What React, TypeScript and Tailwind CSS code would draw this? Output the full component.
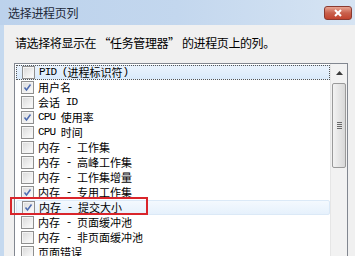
const items = [
  { label: 'PID (进程标识符)', checked: false },
  { label: '用户名', checked: true },
  { label: '会话 ID', checked: false },
  { label: 'CPU 使用率', checked: true },
  { label: 'CPU 时间', checked: false },
  { label: '内存 - 工作集', checked: false },
  { label: '内存 - 高峰工作集', checked: false },
  { label: '内存 - 工作集增量', checked: false },
  { label: '内存 - 专用工作集', checked: true },
  { label: '内存 - 提交大小', checked: true },
  { label: '内存 - 页面缓冲池', checked: false },
  { label: '内存 - 非页面缓冲池', checked: false },
  { label: '页面错误', checked: false },
];

// latin runs are half the width of the CJK glyphs, like the old dialog font
const Label = ({ text }: { text: string }) => {
  const parts = text.match(/[\x00-\x7f]+|[^\x00-\x7f]+/g) || [];
  return (
    <span className="flex h-[13px] items-center whitespace-pre text-black">
      {parts.map((p, i) =>
        /^[\x00-\x7f]+$/.test(p) ? (
          <span
            key={i}
            className="inline-block text-[11px] leading-[13px] tracking-[-0.9px]"
            style={{ fontFamily: '"Liberation Mono", monospace' }}
          >
            {p}
          </span>
        ) : (
          <span
            key={i}
            className="inline-block text-[11px] leading-[13px]"
            style={{ fontFamily: '"Noto Sans CJK SC", sans-serif' }}
          >
            {p}
          </span>
        )
      )}
    </span>
  );
};

const Check = ({ checked }: { checked: boolean }) => (
  <div className="flex h-[13px] w-[13px] shrink-0 items-center justify-center border border-[#8f8f8f] bg-white">
    <div className="flex h-[11px] w-[11px] items-center justify-center border border-[#f4f4f4] bg-gradient-to-br from-[#dcdcdc] to-[#fbfbfb]">
      {checked && (
        <svg width="9" height="9" viewBox="0 0 9 9">
          <path d="M1.5 4.5 L3.5 7 L7.5 1.5" fill="none" stroke="#4d6bb0" strokeWidth="1.5" />
        </svg>
      )}
    </div>
  </div>
);

const App = () => {
  return (
    <div
      className="relative flex h-[256px] w-[355px] flex-col overflow-hidden bg-[#c5d9ef]"
      style={{ fontFamily: '"Noto Sans CJK SC", sans-serif' }}
    >
      {/* title bar */}
      <div className="flex h-[25px] shrink-0 items-center justify-between bg-gradient-to-r from-[#bcd2ec] via-[#c3d7ee] to-[#d6e4f3] pl-[8px] pr-[3px]">
        <span className="text-[12px] leading-none tracking-[-0.3px] text-[#1e2a3a]">选择进程页列</span>
        <div className="flex h-[14px] w-[28px] items-center justify-center rounded-[3px] border border-[#8a3a30] bg-gradient-to-b from-[#e8a493] via-[#c8604c] to-[#c2432e]">
          <svg width="10" height="8" viewBox="0 0 10 8">
            <path d="M2 1 L8 7 M8 1 L2 7" stroke="white" strokeWidth="2" />
          </svg>
        </div>
      </div>

      {/* body */}
      <div className="ml-[4px] flex flex-1 flex-col bg-[#f0f0f0]">
        <p className="mt-[10px] pl-[11px] text-[12px] leading-[16px] tracking-[-0.4px] text-black">
          请选择将显示在 “任务管理器” 的进程页上的列。
        </p>

        <div className="ml-[10px] mt-[12px] flex w-[334px] flex-1 border border-[#828790] bg-white">
          <div className="flex flex-1 flex-col pl-[1px] pt-[1px]">
            {items.map((item, key) => (
              <div
                key={key}
                className={`flex h-[15px] shrink-0 items-center gap-[4px] pl-[5px] ${
                  key === 0
                    ? 'border border-dotted border-[#555] bg-gradient-to-b from-[#eaf3fd] to-[#d9eafb] pl-[4px]'
                    : key === 9
                    ? 'rounded-[2px] border border-[#dbe9f7] bg-gradient-to-b from-[#f4f9fe] to-[#e6f1fc] pl-[4px]'
                    : ''
                }`}
              >
                <Check checked={item.checked} />
                <Label text={item.label} />
              </div>
            ))}
          </div>

          {/* scrollbar */}
          <div className="flex w-[17px] shrink-0 flex-col border-l border-[#e6e6e6] bg-[#f2f2f2]">
            <div className="flex h-[17px] items-center justify-center">
              <svg width="7" height="4" viewBox="0 0 7 4">
                <path d="M0 4 L3.5 0 L7 4 Z" fill="#3b3b3b" />
              </svg>
            </div>
            <div className="mx-[1px] mt-[2px] flex h-[85px] items-center justify-center rounded-[2px] border border-[#9a9a9a] bg-gradient-to-r from-[#f3f3f3] to-[#d8d8d8]">
              <div className="flex flex-col gap-[1px]">
                <div className="h-px w-[5px] bg-[#6a6a6a]" />
                <div className="h-px w-[5px] bg-[#6a6a6a]" />
                <div className="h-px w-[5px] bg-[#6a6a6a]" />
                <div className="h-px w-[5px] bg-[#6a6a6a]" />
              </div>
            </div>
          </div>
        </div>
      </div>

      {/* red annotation box */}
      <div className="absolute left-[10px] top-[197px] h-[18px] w-[138px] border-2 border-[#d9252b]" />
    </div>
  );
};

export default App;
